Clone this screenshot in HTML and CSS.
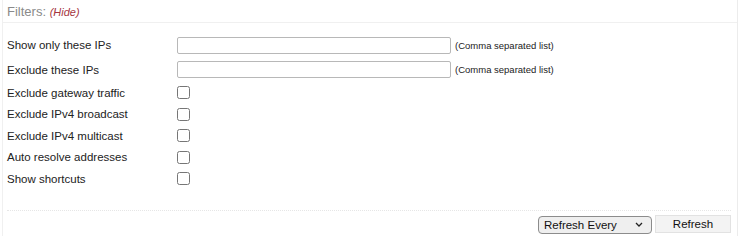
FILE: index.html
```html
<!DOCTYPE html>
<html>
<head>
<meta charset="utf-8">
<link rel="stylesheet" href="styles.css">
</head>
<body>
<div class="panel">
  <div class="panel-head">Filters: <a class="hide-link">(Hide)</a></div>
  <div class="panel-body">
    <div class="row row-text row-first">
      <label class="lbl">Show only these IPs</label>
      <input class="txt" type="text">
      <span class="note">(Comma separated list)</span>
    </div>
    <div class="row row-text">
      <label class="lbl">Exclude these IPs</label>
      <input class="txt" type="text">
      <span class="note">(Comma separated list)</span>
    </div>
    <div class="row row-check">
      <label class="lbl">Exclude gateway traffic</label>
      <input class="chk" type="checkbox">
    </div>
    <div class="row row-check">
      <label class="lbl">Exclude IPv4 broadcast</label>
      <input class="chk" type="checkbox">
    </div>
    <div class="row row-check">
      <label class="lbl">Exclude IPv4 multicast</label>
      <input class="chk" type="checkbox">
    </div>
    <div class="row row-check">
      <label class="lbl">Auto resolve addresses</label>
      <input class="chk" type="checkbox">
    </div>
    <div class="row row-check">
      <label class="lbl">Show shortcuts</label>
      <input class="chk" type="checkbox">
    </div>
  </div>
  <div class="panel-foot">
    <span class="sel-wrap">
      <select class="sel">
        <option>Refresh Every</option>
      </select>
      <svg class="chev" width="8" height="5" viewBox="0 0 8 5"><path d="M1 1 L4 4 L7 1" fill="none" stroke="#222" stroke-width="1.3"/></svg>
    </span>
    <button class="btn" type="button">Refresh</button>
  </div>
</div>
</body>
</html>
```
FILE: styles.css
```css
html, body {
  margin: 0;
  padding: 0;
  background: #ffffff;
}
body {
  font-family: "Liberation Sans", Arial, sans-serif;
  color: #222;
}
.panel {
  margin-left: 2px;
  width: 734px;
  height: 236px;
  border-left: 1px solid #f0f0f0;
  border-right: 1px solid #ececec;
  display: flex;
  flex-direction: column;
}
.panel-head {
  height: 18px;
  padding: 4px 0 0 4px;
  font-size: 13px;
  line-height: 15px;
  color: #8a8a8a;
  border-bottom: 1px solid #f0f0f0;
}
.hide-link {
  font-size: 11px;
  font-style: italic;
  color: #a5363f;
}
.panel-body {
  padding: 10px 0 0 4px;
  height: 177px;
}
.row {
  display: flex;
  align-items: center;
}
.row-text { height: 25px; }
.row-text.row-first { height: 24px; }
.row-check { height: 21.5px; }
.lbl {
  width: 170px;
  font-size: 11.5px;
  color: #222;
}
.txt {
  box-sizing: border-box;
  width: 274px;
  height: 17px;
  margin: 0;
  padding: 0 3px;
  border: 1px solid #b8b8b8;
  border-radius: 2px;
  background: #fff;
}
.note {
  margin-left: 4px;
  font-size: 9.5px;
  color: #222;
}
.chk {
  width: 13px;
  height: 13px;
  margin: 0;
}
.panel-foot {
  margin: 0 6px 0 4px;
  border-top: 1px dotted #e6e6e6;
  padding-top: 4px;
  display: flex;
  justify-content: flex-end;
  gap: 3px;
}
.sel-wrap {
  position: relative;
  display: block;
  width: 114px;
  height: 18px;
}
.sel {
  appearance: none;
  -webkit-appearance: none;
  box-sizing: border-box;
  width: 114px;
  height: 18px;
  margin: 0;
  padding: 0 0 0 5px;
  font-family: "Liberation Sans", Arial, sans-serif;
  font-size: 11.5px;
  color: #111;
  background-color: #efefef;
  border: 1px solid #8c8c8c;
  border-radius: 4px;
}
.chev {
  position: absolute;
  right: 9px;
  top: 7px;
  pointer-events: none;
}
.btn {
  box-sizing: border-box;
  width: 76px;
  height: 18px;
  margin: 0;
  padding: 0;
  font-family: "Liberation Sans", Arial, sans-serif;
  font-size: 11.5px;
  color: #111;
  background: #f3f3f3;
  border: 1px solid #e2e2e2;
  border-radius: 0;
}
```
